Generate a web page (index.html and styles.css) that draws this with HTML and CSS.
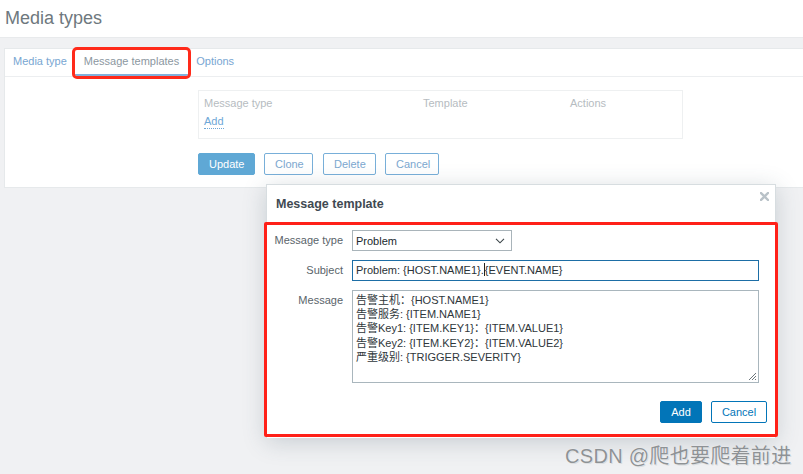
FILE: index.html
```html
<!DOCTYPE html>
<html>
<head>
<meta charset="utf-8">
<link rel="stylesheet" href="styles.css">
</head>
<body>
<div class="page">
  <header class="head"><h1 class="title">Media types</h1></header>
  <main class="main">
    <section class="panel">
      <nav class="tabs">
        <a class="tab">Media type</a>
        <a class="tab tab-active">Message templates</a>
        <a class="tab">Options</a>
      </nav>
      <div class="content">
        <div class="tbl">
          <div class="tbl-head">
            <span class="c1">Message type</span>
            <span class="c2">Template</span>
            <span class="c3">Actions</span>
          </div>
          <a class="add-link">Add</a>
        </div>
        <div class="btns">
          <button class="btn btn-main">Update</button>
          <button class="btn btn-alt">Clone</button>
          <button class="btn btn-alt">Delete</button>
          <button class="btn btn-alt">Cancel</button>
        </div>
      </div>
    </section>
  </main>

  <div class="modal">
    <div class="modal-head">
      <h2 class="modal-title">Message template</h2>
      <svg class="close" width="9" height="9" viewBox="0 0 9 9"><path d="M1 1L8 8M8 1L1 8" stroke="#b9c2c8" stroke-width="2.4" stroke-linecap="square"/></svg>
    </div>
    <div class="modal-body">
      <div class="form">
        <label class="lbl">Message type</label>
        <div class="select"><span>Problem</span>
          <svg width="10" height="6" viewBox="0 0 10 6"><path d="M1 0.8L5 4.8L9 0.8" fill="none" stroke="#3b4549" stroke-width="1.1"/></svg>
        </div>
        <label class="lbl">Subject</label>
        <div class="input">Problem: {HOST.NAME1}.<span class="caret"></span>{EVENT.NAME}</div>
        <label class="lbl lbl-top">Message</label>
        <div class="textarea">
          <div>告警主机：{HOST.NAME1}</div>
          <div>告警服务: {ITEM.NAME1}</div>
          <div>告警Key1: {ITEM.KEY1}：{ITEM.VALUE1}</div>
          <div>告警Key2: {ITEM.KEY2}：{ITEM.VALUE2}</div>
          <div>严重级别: {TRIGGER.SEVERITY}</div>
          <svg class="grip" width="9" height="9" viewBox="0 0 9 9"><path d="M8 1L1 8M8 4L4 8M8 7L7 8" stroke="#6d767b" stroke-width="1"/></svg>
        </div>
      </div>
      <div class="modal-foot">
        <button class="mbtn mbtn-main">Add</button>
        <button class="mbtn mbtn-alt">Cancel</button>
      </div>
    </div>
  </div>

  <div class="watermark">CSDN @爬也要爬着前进</div>
</div>
</body>
</html>
```

FILE: styles.css
```css
html, body {
  margin: 0;
  padding: 0;
}
body {
  font-family: "Liberation Sans", Arial, "Noto Sans CJK SC", sans-serif;
  font-size: 11px;
  background: #f0f1f3;
}
.page {
  position: relative;
  width: 803px;
  height: 474px;
  overflow: hidden;
  background: #f0f1f3;
}
.head {
  height: 38px;
  background: #ffffff;
  border-bottom: 1px solid #e8eaec;
  box-sizing: border-box;
  padding: 7px 0 0 5px;
}
.title {
  margin: 0;
  font-size: 18px;
  font-weight: normal;
  color: #6e787e;
  line-height: 22px;
}
.main {
  padding: 10px 0 0 4px;
}
.panel {
  height: 140px;
  box-sizing: border-box;
  background: #ffffff;
  border: 1px solid #e6e9eb;
  border-right: none;
}
.tabs {
  display: flex;
  height: 28px;
  box-sizing: border-box;
  border-bottom: 1px solid #eceef0;
  padding-left: 8px;
  align-items: stretch;
}
.tab {
  color: #78a6d2;
  line-height: 25px;
  padding: 0 9px;
  white-space: nowrap;
}
.tab:first-child {
  padding-left: 0;
}
.tab-active {
  color: #8c979f;
  padding: 0 9px;
  margin: 1px -1px 0 -1px;
  height: 24px;
  line-height: 22px;
  border-bottom: 2px solid #80b1dc;
  outline: 3px solid #ff2a1a;
  outline-offset: 0px;
  border-radius: 2px;
}
.content {
  padding: 13px 0 0 193px;
}
.tbl {
  width: 485px;
  height: 49px;
  box-sizing: border-box;
  border: 1px solid #eef0f1;
  padding: 5px 0 0 5px;
}
.tbl-head {
  display: flex;
  color: #b6bcc1;
  line-height: 14px;
}
.c1 { width: 219px; }
.c2 { width: 147px; }
.add-link {
  display: inline-block;
  margin-top: 5px;
  color: #6ea7d7;
  line-height: 13px;
  border-bottom: 1px dotted #6ea7d7;
}
.btns {
  display: flex;
  gap: 9px;
  margin-top: 14px;
}
.btn {
  font-family: inherit;
  font-size: 11px;
  height: 22px;
  padding: 0 10px;
  border-radius: 2px;
  box-sizing: border-box;
  margin: 0;
}
.btn-main {
  background: #5fa8d5;
  border: 1px solid #5fa8d5;
  color: #ffffff;
  width: 57px;
}
.btn-alt {
  background: #ffffff;
  border: 1px solid #78afd9;
  color: #7ca7cf;
}
.btn-alt:nth-child(2) { width: 49px; }
.btn-alt:nth-child(3) { width: 53px; margin-left: 1px; }
.btn-alt:nth-child(4) { width: 54px; }

.modal {
  position: absolute;
  left: 266px;
  top: 184px;
  width: 510px;
  height: 254px;
  background: #ffffff;
  border: 1px solid #d7dde0;
  border-bottom: none;
  box-sizing: border-box;
  box-shadow: 0 4px 22px rgba(60, 80, 95, 0.22);
}
.modal-head {
  position: relative;
  height: 37px;
  padding: 11px 0 0 9px;
  box-sizing: border-box;
}
.modal-title {
  margin: 0;
  font-size: 12.5px;
  font-weight: bold;
  color: #3f4a52;
  line-height: 16px;
}
.close {
  position: absolute;
  right: 6px;
  top: 7px;
}
.modal-body {
  margin: 0 -3px;
  height: 215px;
  box-sizing: border-box;
  border: 3px solid #ff2018;
  border-radius: 2px;
  padding: 5px 8px 0 0;
  background: #ffffff;
}
.form {
  display: grid;
  grid-template-columns: 76px 407px;
  column-gap: 9px;
  row-gap: 9px;
  padding-left: 0;
}
.lbl {
  text-align: right;
  color: #5a646a;
  line-height: 20px;
}
.lbl-top {
  line-height: 20px;
}
.select {
  width: 160px;
  height: 21px;
  box-sizing: border-box;
  border: 1px solid #a9b4ba;
  display: flex;
  align-items: center;
  justify-content: space-between;
  padding: 0 6px 0 3px;
  color: #20292e;
}
.input {
  height: 21px;
  box-sizing: border-box;
  border: 1px solid #1d6ea6;
  line-height: 19px;
  padding: 0 3px;
  color: #2a3236;
  white-space: nowrap;
}
.caret {
  display: inline-block;
  width: 1px;
  height: 13px;
  background: #222;
  vertical-align: -2px;
}
.textarea {
  position: relative;
  height: 93px;
  box-sizing: border-box;
  border: 1px solid #a9b6bd;
  padding: 2px 3px;
  line-height: 14.2px;
  color: #2f373b;
}
.grip {
  position: absolute;
  right: 1px;
  bottom: 1px;
}
.modal-foot {
  display: flex;
  justify-content: flex-end;
  gap: 9px;
  margin-top: 18px;
}
.mbtn {
  font-family: inherit;
  font-size: 11px;
  height: 22px;
  box-sizing: border-box;
  border-radius: 2px;
  margin: 0;
  padding: 0;
}
.mbtn-main {
  width: 42px;
  background: #0275b8;
  border: 1px solid #0275b8;
  color: #ffffff;
}
.mbtn-alt {
  width: 56px;
  background: #ffffff;
  border: 1px solid #0275b8;
  color: #0275b8;
}
.watermark {
  position: absolute;
  left: 565px;
  top: 440px;
  font-size: 20px;
  color: #8e9295;
  letter-spacing: 0.3px;
  text-shadow: 0 0 1px #ffffff, 1px 1px 0 #d9dcde;
  white-space: nowrap;
}
```
